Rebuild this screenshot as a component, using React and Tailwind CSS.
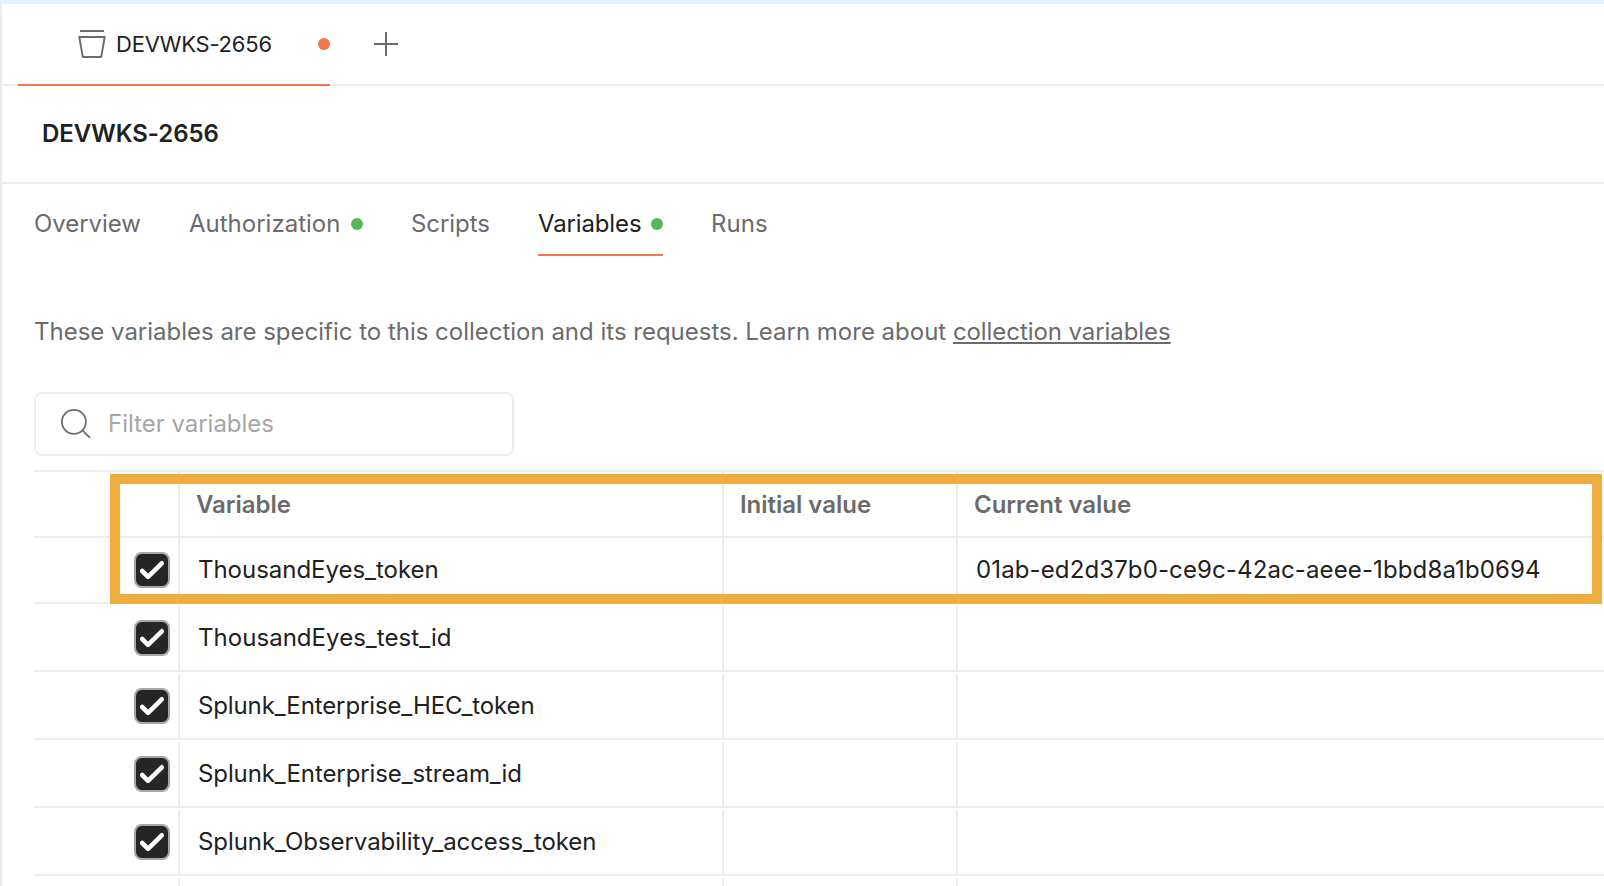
const VARIABLES = [
  { name: "ThousandEyes_token", tracking: "tracking-[-0.03px]", current: "01ab-ed2d37b0-ce9c-42ac-aeee-1bbd8a1b0694" },
  { name: "ThousandEyes_test_id", tracking: "tracking-[0.04px]", current: "" },
  { name: "Splunk_Enterprise_HEC_token", tracking: "tracking-[-0.12px]", current: "" },
  { name: "Splunk_Enterprise_stream_id", tracking: "tracking-[-0.1px]", current: "" },
  { name: "Splunk_Observability_access_token", tracking: "tracking-[-0.06px]", current: "" },
];

const COLUMNS = "grid grid-cols-[144px_544px_234px_1fr]";

function CollectionIcon() {
  return (
    <svg className="block" width="28" height="30" viewBox="0 0 28 30" fill="none" stroke="#6b6b6b" strokeWidth="2">
      <path d="M2 2H26" />
      <path d="M1.3 8H26.7L23.4 27.2Q23.2 28 22.4 28H5.6Q4.8 28 4.6 27.2Z" strokeLinejoin="round" strokeWidth="1.9" />
    </svg>
  );
}

function PlusIcon() {
  return (
    <svg className="block" width="24" height="24" viewBox="0 0 24 24" stroke="#6b6b6b" strokeWidth="2">
      <path d="M12 0V24M0 12H24" />
    </svg>
  );
}

function SearchIcon() {
  return (
    <svg className="block shrink-0" width="32" height="32" viewBox="0 0 32 32" fill="none" stroke="#6b6b6b" strokeWidth="1.8">
      <circle cx="13.9" cy="13.8" r="12" />
      <path d="M22.4 22.3L30 29.8" />
    </svg>
  );
}

function Checkbox() {
  return (
    <div className="size-9 rounded-[8px] border-2 border-[#a6a6a6] bg-[#262626]">
      <svg className="block" width="32" height="32" viewBox="2 2 32 32" fill="none" stroke="#ffffff" strokeWidth="4.6" strokeLinecap="round" strokeLinejoin="round">
        <path d="M8.2 19L14 24.8L27.8 11.3" />
      </svg>
    </div>
  );
}

function Dot({ className }) {
  return <span className={"block size-3 shrink-0 rounded-full " + className} />;
}

function NavTab({ label, width, dot, active, tracking = "tracking-[-0.06px]" }) {
  return (
    <div className={"flex items-center justify-between border-b-2 pt-6.25 pb-4 " + width + (active ? " border-[#f27649] text-[#212121]" : " border-transparent")}>
      <span className={tracking}>{label}</span>
      {dot && <Dot className="bg-[#55b95c]" />}
    </div>
  );
}

function Row({ item, first }) {
  const cell = "border-l-2 border-[#ededed] pt-[17px] pl-4.5 ";
  return (
    <div className={COLUMNS + " border-b-2 border-[#ededed] text-[#212121] " + (first ? "h-[66px]" : "h-[68px] pt-0.5")}>
      <div className="flex justify-end pt-3.5 pr-2">
        <Checkbox />
      </div>
      <div className={cell + item.tracking}>{item.name}</div>
      <div className={cell} />
      <div className={cell + "tracking-[0.12px]"}>{item.current}</div>
    </div>
  );
}

export default function App() {
  return (
    <div className="h-[886px] w-[1604px] overflow-hidden border-t-4 border-[#e9f0fc] bg-white font-['Inter',sans-serif] text-[24px] leading-[29px] whitespace-nowrap text-[#6b6b6b]">
      <div className="h-full border-l-2 border-[#ededed]">
        <div className="flex h-[82px] border-b-2 border-[#ededed] pl-4">
          <div className="-mb-0.5 flex h-[82px] w-[312px] border-b-2 border-[#f27649] pl-15">
            <div className="pt-[25px]">
              <CollectionIcon />
            </div>
            <span className="pt-[27px] pl-[10px] text-[22px] leading-[26px] tracking-[-0.2px] text-[#212121]">DEVWKS-2656</span>
            <Dot className="mt-[34px] ml-auto bg-[#f27649]" />
          </div>
          <div className="mt-7 ml-11">
            <PlusIcon />
          </div>
        </div>

        <h1 className="h-[98px] border-b-2 border-[#ededed] pt-[33px] pl-10 font-semibold tracking-[-0.04px] text-[#212121]">DEVWKS-2656</h1>

        <nav className="flex h-[72px] gap-12 pl-8">
          <NavTab label="Overview" width="w-[107px]" />
          <NavTab label="Authorization" width="w-[174px]" tracking="tracking-[0px]" dot />
          <NavTab label="Scripts" width="w-[79px]" />
          <NavTab label="Variables" width="w-[125px]" tracking="tracking-[-0.14px]" dot active />
          <NavTab label="Runs" width="w-[57px]" tracking="tracking-[0.06px]" />
        </nav>

        <p className="mt-[61px] pl-8">
          <span className="tracking-[-0.01px]">These variables are specific to this collection and its requests. Learn more about </span>
          <a className="tracking-[-0.07px] underline decoration-2 underline-offset-2">collection variables</a>
        </p>

        <div className="mt-[46px] ml-8 flex h-16 w-[480px] rounded-[8px] border-2 border-[#ededed] pl-6">
          <div className="pt-3.5">
            <SearchIcon />
          </div>
          <span className="pt-[15px] pl-4 tracking-[-0.02px] text-[#a6a6a6]">Filter variables</span>
        </div>

        <div className="relative mt-3.5 ml-8 border-t-2 border-[#ededed]">
          <div className={COLUMNS + " h-[66px] border-b-2 border-[#ededed] font-semibold tracking-[-0.02px]"}>
            <div />
            <div className="border-l-2 border-[#ededed] pt-[18px] pl-4">Variable</div>
            <div className="border-l-2 border-[#ededed] pt-[18px] pl-4">Initial value</div>
            <div className="border-l-2 border-[#ededed] pt-[18px] pl-4">Current value</div>
          </div>
          {VARIABLES.map((item, i) => (
            <Row key={item.name} item={item} first={i === 0} />
          ))}
          <div className={COLUMNS + " h-[68px] pt-0.5"}>
            <div />
            <div className="border-l-2 border-[#ededed]" />
            <div className="border-l-2 border-[#ededed]" />
            <div className="border-l-2 border-[#ededed]" />
          </div>
          <div className="absolute top-0.5 right-0.5 left-19 h-[130px] border-10 border-[#efad3e]" />
        </div>
      </div>
    </div>
  );
}
